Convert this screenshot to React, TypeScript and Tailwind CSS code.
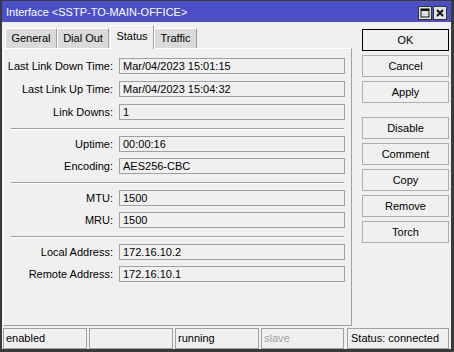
import React from "react";

const font = { fontFamily: '"Liberation Sans", Arial, sans-serif' };

type Row = { label: string; value: string };

const groups: { gap: string; rows: Row[] }[] = [
  {
    gap: "gap-[7px]",
    rows: [
      { label: "Last Link Down Time:", value: "Mar/04/2023 15:01:15" },
      { label: "Last Link Up Time:", value: "Mar/04/2023 15:04:32" },
      { label: "Link Downs:", value: "1" },
    ],
  },
  {
    gap: "gap-[6px]",
    rows: [
      { label: "Uptime:", value: "00:00:16" },
      { label: "Encoding:", value: "AES256-CBC" },
    ],
  },
  {
    gap: "gap-[6px]",
    rows: [
      { label: "MTU:", value: "1500" },
      { label: "MRU:", value: "1500" },
    ],
  },
  {
    gap: "gap-[6px]",
    rows: [
      { label: "Local Address:", value: "172.16.10.2" },
      { label: "Remote Address:", value: "172.16.10.1" },
    ],
  },
];

function Field({ label, value }: Row) {
  return (
    <div className="flex items-center h-[16px]">
      <div className="w-[109px] text-right pr-[0px] leading-none">{label}</div>
      <div className="ml-[6px] w-[226px] h-[16px] border border-[#a0a0a0] bg-[#f0f0f0] flex items-center pl-[3px] leading-none">
        {value}
      </div>
    </div>
  );
}

function Separator() {
  return <div className="ml-[7px] w-[333px] border-t border-t-[#a0a0a0] border-b border-b-white my-[8px] mb-[6px]" />;
}

function Btn({ children, def }: { children: React.ReactNode; def?: boolean }) {
  return (
    <div
      className={
        "h-[22px] w-[87px] flex items-center justify-center bg-[#f0f0f0] border " +
        (def ? "border-black" : "border-[#adadad]")
      }
    >
      {children}
    </div>
  );
}

function Tab({ label, w, active }: { label: string; w: string; active?: boolean }) {
  if (active) {
    return (
      <div
        className={
          w +
          " h-[24px] -mb-[1px] relative z-10 bg-[#f0f0f0] border-l border-t border-l-white border-t-white border-r border-r-[#a0a0a0] flex items-center justify-center pb-[2px]"
        }
      >
        {label}
      </div>
    );
  }
  return (
    <div
      className={
        w +
        " h-[20px] bg-[#dadada] border-l border-t border-l-white border-t-white border-r border-r-[#a0a0a0] flex items-center justify-center"
      }
    >
      {label}
    </div>
  );
}

export default function App() {
  return (
    <div
      className="w-[454px] h-[352px] bg-[#f0f0f0] border-t border-l-2 border-r-[3px] border-b-[3px] border-[#3a3a3a] flex flex-col text-[11px] text-black overflow-hidden"
      style={font}
    >
      {/* title bar */}
      <div className="h-[21px] bg-[#4b50c9] flex items-center pl-[4px] pr-[4px] text-white text-[11px]">
        <span className="mt-[1px]">Interface &lt;SSTP-TO-MAIN-OFFICE&gt;</span>
        <div className="ml-auto flex gap-[1px] mt-[2px]">
          <div className="w-[14px] h-[14px] bg-[#e2e2e2] border border-[#333] flex items-center justify-center">
            <svg width="10" height="10" viewBox="0 0 10 10">
              <rect x="1" y="1" width="8" height="8" fill="none" stroke="#111" strokeWidth="1" />
              <rect x="1" y="1" width="8" height="2" fill="#111" />
            </svg>
          </div>
          <div className="w-[14px] h-[14px] bg-[#e2e2e2] border border-[#333] flex items-center justify-center">
            <svg width="10" height="10" viewBox="0 0 10 10">
              <path d="M2 2 L8 8 M8 2 L2 8" stroke="#111" strokeWidth="2" />
            </svg>
          </div>
        </div>
      </div>

      {/* body */}
      <div className="h-[304px] flex pl-[1px] pt-[3px]">
        <div className="w-[349px] flex flex-col">
          <div className="h-[23px] flex items-end pl-[2px]">
            <Tab label="General" w="w-[52px]" />
            <Tab label="Dial Out" w="w-[52px]" />
            <div className="w-[1px]" />
            <Tab label="Status" w="w-[44px]" active />
            <Tab label="Traffic" w="w-[43px]" />
          </div>
          <div className="h-[278px] border-t border-l border-t-white border-l-white border-r border-b border-r-[#a0a0a0] border-b-[#a0a0a0] pt-[9px] flex flex-col">
            {groups.map((g, i) => (
              <React.Fragment key={i}>
                {i > 0 && <Separator />}
                <div className={"flex flex-col " + g.gap}>
                  {g.rows.map((r) => (
                    <Field key={r.label} {...r} />
                  ))}
                </div>
              </React.Fragment>
            ))}
          </div>
        </div>

        <div className="ml-[10px] pt-[4px] flex flex-col gap-[4px]">
          <Btn def>OK</Btn>
          <Btn>Cancel</Btn>
          <Btn>Apply</Btn>
          <div className="h-[6px]" />
          <Btn>Disable</Btn>
          <Btn>Comment</Btn>
          <Btn>Copy</Btn>
          <Btn>Remove</Btn>
          <Btn>Torch</Btn>
        </div>
      </div>

      {/* status bar */}
      <div className="h-[23px] pt-[2px] pl-[1px] flex">
        <div className="w-[84px] h-[21px] border border-[#a0a0a0] flex items-center pl-[2px]">enabled</div>
        <div className="ml-[2px] w-[84px] h-[21px] border border-[#a0a0a0]" />
        <div className="ml-[2px] w-[84px] h-[21px] border border-[#a0a0a0] flex items-center pl-[2px]">running</div>
        <div className="ml-[2px] w-[83px] h-[21px] border border-[#a0a0a0] flex items-center pl-[2px] text-[#a0a0a0]">slave</div>
        <div className="ml-[3px] w-[102px] h-[21px] border border-[#a0a0a0] flex items-center pl-[3px]">Status: connected</div>
      </div>
    </div>
  );
}
